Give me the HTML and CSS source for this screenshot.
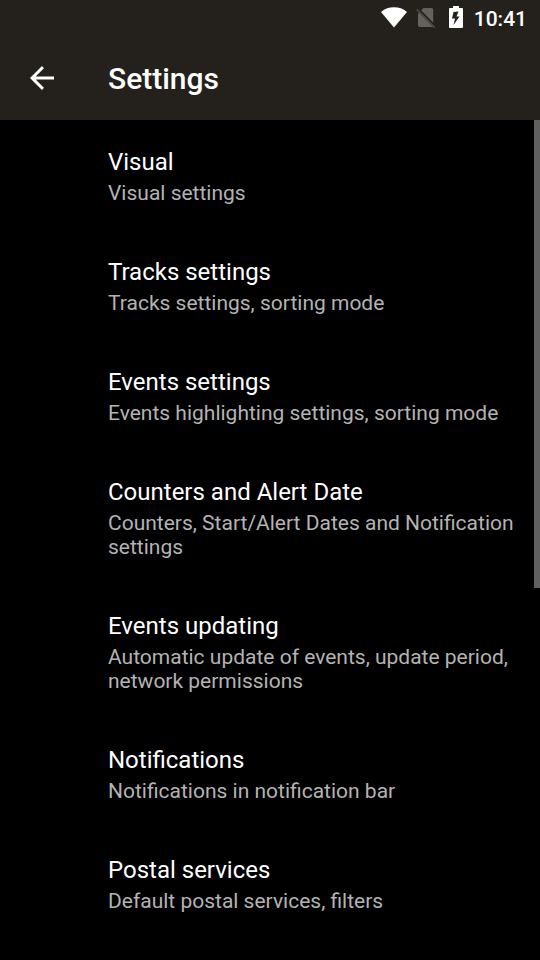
FILE: index.html
```html
<!DOCTYPE html>
<html lang="en">
<head>
<meta charset="utf-8">
<meta name="viewport" content="width=device-width, initial-scale=1">
<title>Settings</title>
<link rel="stylesheet" href="styles.css">
</head>
<body>
<header class="top">
  <div class="status">
    <svg class="wifi" viewBox="0 0 26 22" aria-hidden="true"><path d="M13 21.500 0 6C4 2.700 8 1.300 13 1.300s9 1.400 13 4.700z" fill="#fff"/></svg>
    <svg class="sim" viewBox="0 0 20 22" aria-hidden="true"><path d="M5.500 4 7.500 2H15.500q1.700 0 1.700 1.700V21H3.900q-1.900 0-1.900-1.900V8z" fill="#65625e"/><path d="M2 2.500 19.500 20.500" stroke="#24211d" stroke-width="2"/><path d="M.7 3.300 18.700 21.700" stroke="#4a4743" stroke-width="1.800"/></svg>
    <svg class="battery" viewBox="0 0 14 22" aria-hidden="true"><path d="M4 0h6v2h3q1 0 1 1v18q0 1-1 1H1q-1 0-1-1V3q0-1 1-1h3z" fill="#fff"/><path d="M4.500 6 9.500 5.500 7.500 10.500H10.500L4.500 19 6 12.500H3z" fill="#24211d"/></svg>
    <time class="clock">10:41</time>
  </div>
  <div class="bar">
    <button class="back" type="button" aria-label="Back"><svg class="arrow" viewBox="0 0 24 24" aria-hidden="true"><path d="M24 10.500H5.700L13.900 2.200 12 0 0 12l12 12 1.900-2.200-8.200-8.300H24z" fill="#fff"/></svg></button>
    <h1 class="title">Settings</h1>
  </div>
</header>
<main class="content">
  <nav class="list" aria-label="Settings">
    <a class="item" href="#visual"><span class="name">Visual</span><span class="summary">Visual settings</span></a>
    <a class="item" href="#tracks"><span class="name">Tracks settings</span><span class="summary">Tracks settings, sorting mode</span></a>
    <a class="item" href="#events"><span class="name">Events settings</span><span class="summary">Events highlighting settings, sorting mode</span></a>
    <a class="item" href="#counters"><span class="name">Counters and Alert Date</span><span class="summary">Counters, Start/Alert Dates and Notification settings</span></a>
    <a class="item" href="#updating"><span class="name">Events updating</span><span class="summary">Automatic update of events, update period, network permissions</span></a>
    <a class="item" href="#notifications"><span class="name">Notifications</span><span class="summary">Notifications in notification bar</span></a>
    <a class="item" href="#postal"><span class="name">Postal services</span><span class="summary">Default postal services, filters</span></a>
  </nav>
  <div class="thumb"></div>
</main>
</body>
</html>
```
FILE: styles.css
```css
* { box-sizing: border-box; }
body {
  margin: 0;
  min-height: 100vh;
  background: #000;
  color: #fff;
  font-family: Roboto, "Liberation Sans", sans-serif;
}
.top { background: #24211d; }
.status {
  display: flex;
  align-items: flex-start;
  justify-content: flex-end;
  height: 36px;
  padding: 6px 13px 0 0;
}
.wifi { width: 26px; height: 22px; margin-right: 9px; }
.sim { width: 20px; height: 22px; margin-right: 13px; }
.battery { width: 14px; height: 22px; margin-right: 11px; }
.clock { font-size: 21px; line-height: 26px; font-weight: 500; }
.bar {
  display: flex;
  align-items: flex-start;
  padding: 24px 24px 22px 30px;
}
.back {
  display: flex;
  align-items: center;
  width: 78px;
  height: 36px;
  padding: 0;
  border: 0;
  background: none;
}
.arrow { width: 24px; height: 24px; }
.title { margin: 0; font-size: 30px; line-height: 38px; font-weight: 500; }
.content { position: relative; }
.list { display: flex; flex-direction: column; }
.item {
  display: flex;
  flex-direction: column;
  gap: 1px;
  padding: 24px 24px 25px 108px;
  color: inherit;
  text-decoration: none;
}
.name { font-size: 24px; line-height: 36px; }
.summary { font-size: 21px; line-height: 24px; color: #b3b3b3; }
.thumb {
  position: absolute;
  top: 0;
  right: 0;
  width: 6px;
  height: 468px;
  background: #606060;
}
```
